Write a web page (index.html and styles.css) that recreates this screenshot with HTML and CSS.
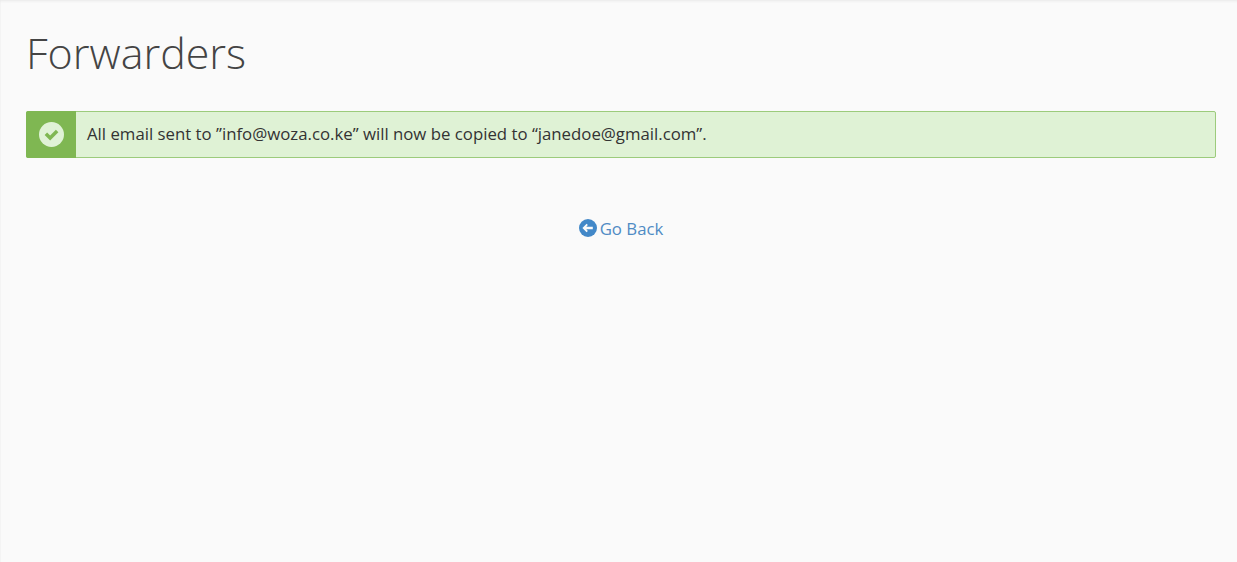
FILE: index.html
```html
<!DOCTYPE html>
<html lang="en">
<head>
<meta charset="utf-8">
<title>Forwarders</title>
<link rel="stylesheet" href="styles.css">
</head>
<body>
<main class="page">
  <h1 class="title">Forwarders</h1>
  <div class="alert">
    <div class="alert-icon">
      <svg class="icon" viewBox="0 0 24 24" width="25" height="25" aria-hidden="true"><circle cx="12" cy="12" r="12" fill="#e0f2d6"/><path d="M5.4 12.5l2.4-2.4 2.9 2.9 5.5-5.5 2.4 2.4-7.9 7.9z" fill="#7fb752"/></svg>
    </div>
    <div class="alert-text">All email sent to ”info@woza.co.ke” will now be copied to “janedoe@gmail.com”.</div>
  </div>
  <div class="back">
    <a class="back-link" href="#">
      <svg class="back-icon" viewBox="0 0 18 18" width="18" height="18" aria-hidden="true"><circle cx="9" cy="9" r="9" fill="#4288c8"/><path d="M3.4 9l4.2-4.2 1.3 1.3-1.6 1.6h6.5v2.6H7.3l1.6 1.6-1.3 1.3z" fill="#fafafa"/></svg>
      <span>Go Back</span>
    </a>
  </div>
</main>
</body>
</html>
```
FILE: styles.css
```css
html, body {
  margin: 0;
  height: 100%;
}
body {
  background: #fafafa;
  font-family: "Open Sans", sans-serif;
  color: #333;
  overflow: hidden;
}
.page {
  box-sizing: border-box;
  height: 562px;
  padding: 0 21px 0 26px;
  box-shadow: inset 0 3px 3px -2px #e8e8e8, inset 1px 0 0 #f4f4f4;
}
.title {
  margin: 0;
  padding-top: 25px;
  font-size: 43px;
  line-height: 56px;
  font-weight: 300;
  color: #444;
}
.alert {
  display: flex;
  height: 47px;
  box-sizing: border-box;
  margin-top: 30px;
  border: 1px solid #9ccb7c;
  border-radius: 2px;
  background: #dff2d5;
}
.alert-icon {
  width: 50px;
  margin: -1px 0 -1px -1px;
  flex: none;
  background: #7fb752;
  border-radius: 2px 0 0 2px;
  display: flex;
  align-items: center;
  justify-content: center;
}
.icon { display: block; }
.alert-text {
  padding-left: 11px;
  font-size: 16.8px;
  line-height: 44px;
  color: #333;
  white-space: nowrap;
}
.back {
  margin-top: 59px;
  display: flex;
  justify-content: center;
}
.back-link {
  display: flex;
  align-items: center;
  gap: 3px;
  font-size: 16.8px;
  line-height: 24px;
  color: #4f8bc4;
  text-decoration: none;
}
.back-icon { display: block; margin-top: -3px; }
```
